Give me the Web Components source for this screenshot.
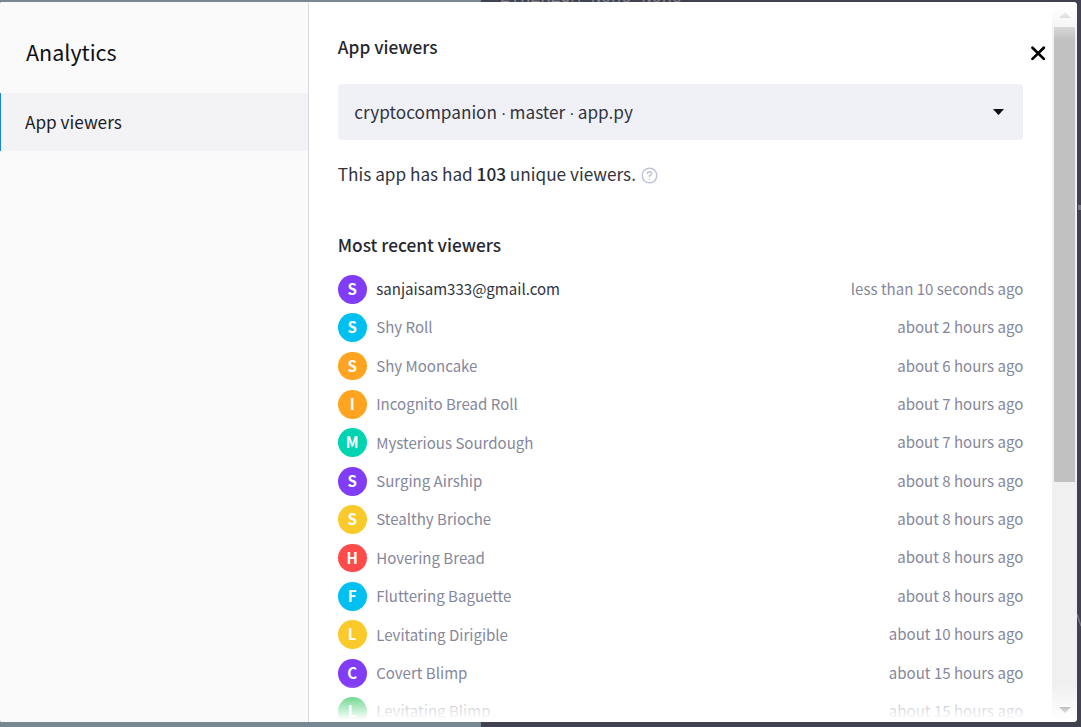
<!DOCTYPE html>
<html lang="en">
<head>
<meta charset="utf-8">
<title>Analytics</title>
<style>
html,body{margin:0;height:100%;overflow:hidden}
body{font-family:"Noto Sans CJK SC","Open Sans",sans-serif;color:#31333f}
</style>
</head>
<body>
<app-backdrop>
  <analytics-dialog>
    <side-nav slot="nav" heading="Analytics"><nav-item>App viewers</nav-item></side-nav>
    <viewers-panel></viewers-panel>
    <scroll-bar slot="scroll"></scroll-bar>
  </analytics-dialog>
</app-backdrop>
<script>
const define = (name, html, init) => customElements.define(name, class extends HTMLElement {
  connectedCallback() {
    if (this.shadowRoot) return;
    const root = this.attachShadow({mode: 'open'});
    root.innerHTML = html;
    if (init) init.call(this, root);
  }
});

define('app-backdrop', `<style>
:host{display:block;position:relative;box-sizing:border-box;width:100%;height:727px;padding:2px 4px 5px 0;overflow:hidden;background:linear-gradient(90deg,#778892 481px,#41424f 481px)}
.row{position:absolute;left:500px;top:-12px;height:20px;font:17px/20px "Liberation Mono",monospace;white-space:pre;color:#858691;letter-spacing:-.1px}
.dash{position:absolute;left:1078px;top:205px;width:3px;height:5px;background:#777885}
.edge{position:absolute;left:1077px;top:614px}
</style><div class="row">ETHEREUM None None</div><i class="dash"></i><svg class="edge" width="4" height="13"><path d="M0 0L4 12" stroke="#777885" stroke-width="1.4"/></svg><slot></slot>`);

define('analytics-dialog', `<style>
:host{display:flex;position:relative;height:720px;border-radius:2px 4px 4px 2px;background:#fff;overflow:hidden}
main{flex:1;min-width:0;overflow:hidden}
.fade{position:absolute;left:309px;right:0;height:38px;pointer-events:none}
.top{top:0;background:linear-gradient(#fff 10%,rgba(255,255,255,0))}
.bottom{bottom:0;background:linear-gradient(rgba(255,255,255,0),#fff 94%)}
svg{position:absolute;left:1031px;top:44px}
</style><slot name="nav"></slot><main><slot></slot></main><slot name="scroll"></slot>
<div class="fade top"></div><div class="fade bottom"></div>
<svg width="15" height="15" viewBox="0 0 15 15"><path d="M1.5 1.7L12.8 12.9M12.8 1.7L1.5 12.9" stroke="#000" stroke-width="2.7" stroke-linecap="round"/></svg>`);

define('side-nav', `<style>
:host{display:block;box-sizing:border-box;flex:0 0 309px;background:#fafafa;border-right:1px solid #d5dae5}
h1{margin:0;height:91px;padding:34px 0 0 26px;box-sizing:border-box;font-size:21.5px;line-height:32px;font-weight:400;color:#0e1117}
</style><h1></h1><slot></slot>`, function (r) { r.querySelector('h1').textContent = this.getAttribute('heading'); });

define('nav-item', `<style>
:host{display:flex;align-items:center;height:58px;box-sizing:border-box;padding-left:24px;border-left:1px solid #1c83e1;background:#f3f3f5;font-size:17.2px;line-height:26px;color:#1a1c26}
</style><slot></slot>`);

define('scroll-bar', `<style>
:host{display:flex;flex-direction:column;align-items:center;width:25px;background:#f0f0f0}
.btn{height:25px;display:grid;place-items:center}
.thumb{width:21px;height:455px;background:#c1c1c1}
.space{flex:1}
</style><div class="btn"><svg width="12" height="6"><path d="M0 6L6 0L12 6Z" fill="#a3a3a3"/></svg></div><div class="thumb"></div><div class="space"></div><div class="btn"><svg width="12" height="6"><path d="M0 0H12L6 6Z" fill="#505050"/></svg></div>`);

define('app-select', `<style>
:host{display:flex;align-items:center;justify-content:space-between;box-sizing:border-box;height:56px;padding:0 19.5px 0 16.5px;border-radius:4px;background:#f0f1f6;font-size:17.2px;line-height:26px}
::slotted(i){font-family:"Liberation Sans",sans-serif;font-style:normal;letter-spacing:-.9px}
</style><span><slot></slot></span><svg width="11" height="6"><path d="M0 0H11L6.1 5.4Q5.5 6 4.9 5.4Z" fill="#0e1117"/></svg>`);

define('viewer-row', `<style>
:host{display:flex;align-items:center;height:28.8px;font-size:15.05px;line-height:24px;color:#85879b}
:host([self]) .name{color:#31333f}
.avatar{flex:none;width:28.8px;height:28.8px;border-radius:50%;background:var(--tone);color:#fff;font-weight:700;line-height:28.8px;text-align:center;margin-right:9.6px}
.name{flex:1;margin-top:-.2px}
.time{margin-top:-.9px}
</style><div class="avatar"></div><span class="name"></span><span class="time"></span>`, function (r) {
  const name = this.getAttribute('name');
  r.querySelector('.avatar').textContent = name[0].toUpperCase();
  r.querySelector('.name').textContent = name;
  r.querySelector('.time').textContent = this.getAttribute('time');
  this.style.setProperty('--tone', this.getAttribute('tone'));
});

define('viewers-panel', `<style>
:host{display:block;padding:31px 29px 0 28.8px}
h2{margin:0;font-size:17.25px;line-height:28px;font-weight:500;color:#262730}
app-select{margin-top:23px}
p{display:flex;align-items:center;margin:20px 0 0;font-size:17.2px;line-height:28px}
p b{font-weight:500;color:#262730}
p svg{margin-left:5px;margin-top:2px}
.recent{margin-top:43px}
.list{display:flex;flex-direction:column;gap:9.6px;margin:15.8px -.4px 0 0}
</style>
<h2>App viewers</h2>
<app-select>cryptocompanion <i>·</i> master <i>·</i> app.py</app-select>
<p><span>This app has had <b>103</b> unique viewers.</span><svg width="17" height="17" viewBox="0 0 17 17" fill="none" stroke="#bfc5d8" stroke-width="1.5" stroke-linecap="round"><circle cx="8.5" cy="8.5" r="7.3"/><path d="M6.4 6.6Q6.5 4.8 8.5 4.8Q10.6 4.9 10.6 6.7Q10.5 8 8.5 8.8V9.4"/><path d="M8.5 12V12.1"/></svg></p>
<h2 class="recent">Most recent viewers</h2>
<div class="list"></div>`, function (r) {
  const rows = [
    ['sanjaisam333@gmail.com', 'less than 10 seconds ago', '#803df5'],
    ['Shy Roll', 'about 2 hours ago', '#00c0f2'],
    ['Shy Mooncake', 'about 6 hours ago', '#ffa421'],
    ['Incognito Bread Roll', 'about 7 hours ago', '#ffa421'],
    ['Mysterious Sourdough', 'about 7 hours ago', '#00d4b1'],
    ['Surging Airship', 'about 8 hours ago', '#803df5'],
    ['Stealthy Brioche', 'about 8 hours ago', '#faca2b'],
    ['Hovering Bread', 'about 8 hours ago', '#ff4b4b'],
    ['Fluttering Baguette', 'about 8 hours ago', '#00c0f2'],
    ['Levitating Dirigible', 'about 10 hours ago', '#faca2b'],
    ['Covert Blimp', 'about 15 hours ago', '#803df5'],
    ['Levitating Blimp', 'about 15 hours ago', '#21c354']
  ];
  const list = r.querySelector('.list');
  rows.forEach(([name, time, tone], i) => {
    const row = document.createElement('viewer-row');
    row.setAttribute('name', name);
    row.setAttribute('time', time);
    row.setAttribute('tone', tone);
    if (i === 0) row.setAttribute('self', '');
    list.append(row);
  });
});
</script>
</body>
</html>
